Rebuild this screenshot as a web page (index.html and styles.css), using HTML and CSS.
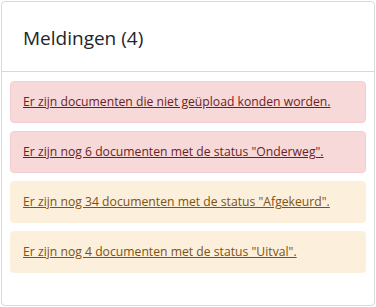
FILE: index.html
```html
<!DOCTYPE html>
<html lang="nl">
<head>
  <meta charset="UTF-8" />
  <meta name="viewport" content="width=device-width, initial-scale=1.0" />
  <title>Meldingen</title>
  <link rel="stylesheet" href="styles.css">
</head>
<body>
  <div class="card">
    <div class="card-header">
      <h2 class="card-title">Meldingen (4)</h2>
    </div>
    <div class="card-body">
      <div class="alert alert-danger">
        <a href="#" class="alert-link">Er zijn documenten die niet geüpload konden worden.</a>
      </div>
      <div class="alert alert-danger">
        <a href="#" class="alert-link">Er zijn nog 6 documenten met de status "Onderweg".</a>
      </div>
      <div class="alert alert-warning">
        <a href="#" class="alert-link">Er zijn nog 34 documenten met de status "Afgekeurd".</a>
      </div>
      <div class="alert alert-warning">
        <a href="#" class="alert-link">Er zijn nog 4 documenten met de status "Uitval".</a>
      </div>
    </div>
  </div>
</body>
</html>
```

FILE: styles.css
```css
* {
  margin: 0;
  padding: 0;
  box-sizing: border-box;
}

body {
  font-family: "Open Sans", "Noto Sans", sans-serif;
  background: #fff;
  padding: 1px;
}

.card {
  width: 374px;
  height: 305px;
  border: 1px solid #d6d9dd;
  border-radius: 4px;
  background: #fff;
}

.card-header {
  height: 70px;
  display: flex;
  align-items: center;
  padding: 0 21px;
  border-bottom: 1px solid #d6d9dd;
}

.card-title {
  font-size: 19px;
  font-weight: 400;
  color: #212529;
  line-height: 24px;
  padding-top: 3px;
}

.card-body {
  display: flex;
  flex-direction: column;
  gap: 8px;
  padding: 9px 8px 0;
}

.alert {
  border: 1px solid transparent;
  border-radius: 4px;
  padding: 11px 12px;
  font-size: 12.2px;
  line-height: 18px;
}

.alert-danger {
  background: #f8d9da;
  border-color: #f5cdd0;
}

.alert-danger .alert-link {
  color: #6a1f24;
}

.alert-warning {
  background: #fcefdc;
  border-color: #fcefdc;
}

.alert-warning .alert-link {
  color: #7d5310;
}

.alert-link {
  text-decoration: underline;
}
```
